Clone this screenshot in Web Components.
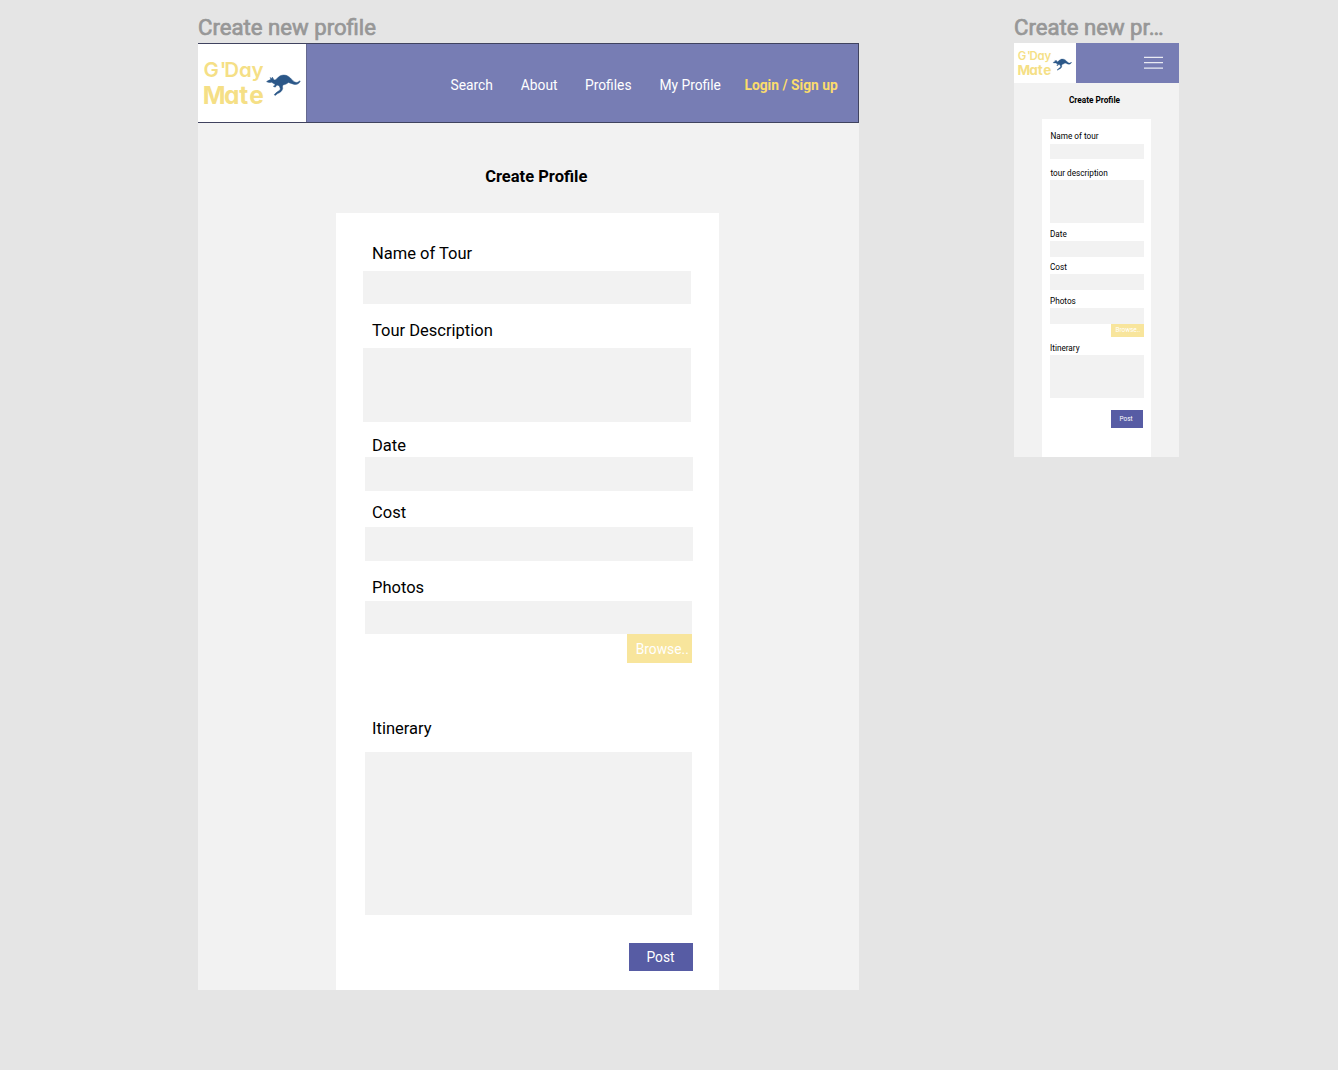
<!DOCTYPE html>
<html lang="en">
<head>
<meta charset="utf-8">
<title>Create new profile</title>
<style>
html,body{margin:0;height:100%}
body{background:#e5e5e5;font-family:Roboto,"Liberation Sans",sans-serif;color:#000}
</style>
</head>
<body>
<design-canvas>
  <art-board label="Create new profile" style="--w:660.5px;--h:947px;--tw:178px">
    <site-header></site-header>
    <tour-form heading="Create Profile" style="--head-top:44px;--head-lh:20px;--head-size:16.5px;--head-shift:16px;--card-gap:26px;--card-x:138px;--card-w:383px;--pad:27px;--fs:16.5px;--lh:20px;--indent:9px">
      <tour-field label="Name of Tour" style="--mt:31px;--gap:7px;--bh:33px;--bw:328px"></tour-field>
      <tour-field label="Tour Description" style="--mt:17px;--gap:7px;--bh:74px;--bw:328px"></tour-field>
      <tour-field label="Date" style="--mt:14px;--gap:0.5px;--bh:34.5px;--bw:328px;--bx:2px"></tour-field>
      <tour-field label="Cost" style="--mt:12px;--gap:4px;--bh:34px;--bw:328px;--bx:2px"></tour-field>
      <tour-field label="Photos" style="--mt:17px;--gap:3px;--bh:33px;--bw:327px;--bx:2px"></tour-field>
      <flat-button style="--x:264.4px;--mt:0px;--bw:64.4px;--bh:29px;--bg:#f8e59c;--fs:13.8px;--tx:8.3px;--ty:1px">Browse..</flat-button>
      <tour-field label="Itinerary" style="--mt:56px;--gap:13px;--bh:163px;--bw:327px;--bx:2px"></tour-field>
      <flat-button style="--x:266px;--mt:28px;--bw:64px;--bh:28px;--bg:#575ca4;--fs:13.8px;--tx:17.5px;--ty:1px">Post</flat-button>
    </tour-form>
  </art-board>
  <art-board label="Create new pr…" style="--w:165px;--h:414px;--tw:149.5px">
    <site-header compact></site-header>
    <tour-form heading="Create Profile" style="--head-top:12px;--head-lh:10px;--head-size:8.25px;--head-shift:0px;--head-end:4px;--card-gap:14px;--card-x:28px;--card-w:109px;--pad:8px;--fs:8.2px;--lh:10px;--indent:.5px">
      <tour-field label="Name of tour" style="--mt:12px;--gap:3px;--bh:15px;--bw:94px"></tour-field>
      <tour-field label="tour description" style="--mt:9px;--gap:2px;--bh:43px;--bw:94px"></tour-field>
      <tour-field label="Date" style="--mt:6px;--gap:2px;--bh:16px;--bw:94px;--bx:.4px;--indent:0px"></tour-field>
      <tour-field label="Cost" style="--mt:5px;--gap:2px;--bh:16px;--bw:94px;--indent:0px"></tour-field>
      <tour-field label="Photos" style="--mt:6px;--gap:2px;--bh:16px;--bw:94px;--indent:0px"></tour-field>
      <flat-button style="--x:61px;--mt:0px;--bw:33.4px;--bh:13px;--bg:#f8e59c;--fs:6.4px;--tx:4.5px;--ty:2px">Browse..</flat-button>
      <tour-field label="Itinerary" style="--mt:6px;--gap:2px;--bh:43px;--bw:94px;--bx:.4px;--indent:0px"></tour-field>
      <flat-button style="--x:61px;--mt:12px;--bw:32px;--bh:18px;--bg:#575ca4;--fs:6.4px;--tx:8.5px;--ty:2px">Post</flat-button>
    </tour-form>
  </art-board>
</design-canvas>
<script>
const shadow = (el, html) => { el.attachShadow({mode:'open'}).innerHTML = html; };

customElements.define('design-canvas', class extends HTMLElement {
  connectedCallback() {
    shadow(this, `<style>
      :host{display:flex;align-items:flex-start;gap:155.5px;box-sizing:border-box;width:1338px;height:1070px;padding:12px 0 0 198px;overflow:hidden;background:#e5e5e5}
    </style><slot></slot>`);
  }
});

customElements.define('art-board', class extends HTMLElement {
  connectedCallback() {
    shadow(this, `<style>
      :host{display:flex;flex-direction:column;flex:none;width:var(--w)}
      svg{display:block;height:31px;width:100%;overflow:visible}
      text{font:400 22.3px Roboto,sans-serif;fill:#979797;stroke:#979797;stroke-width:.7px}
      .page{height:var(--h);background:#f2f2f2;display:flex;flex-direction:column;overflow:hidden}
    </style>
    <svg><text x="0" y="23" style="white-space:pre"></text></svg>
    <div class="page"><slot></slot></div>`);
    const t = this.shadowRoot.querySelector('text');
    t.textContent = this.getAttribute('label');
    t.setAttribute('textLength', parseFloat(this.style.getPropertyValue('--tw')));
    t.setAttribute('lengthAdjust', 'spacingAndGlyphs');
  }
});

customElements.define('gday-logo', class extends HTMLElement {
  connectedCallback() {
    const box = this.getAttribute('box') || '0 0 108 79';
    shadow(this, `<style>
      :host{display:block;background:#fff}
      svg{display:block;width:100%;height:100%}
      text{font-family:Inter,Lato,sans-serif;font-feature-settings:"cv11";fill:#f5df86}
    </style>
    <svg viewBox="${box}" preserveAspectRatio="none">
      <text x="5.4 21.8 26.3 41 53.6" y="33.3" font-size="20.5" font-weight="600">G'Day</text>
      <text x="4.8 26 41.2 51.2" y="61" font-size="24.5" font-weight="700">Mate</text>
      <path fill="#2b5788" stroke="#2b5788" stroke-width=".5" d="M68.6 38.1 C70.2 37.2 71.6 36.2 72.9 35.8 L72.1 34 L74.2 35.2 L74.3 33.5 L75.9 36.3 C77.1 37 78.2 36 79.5 34.5 C82 31.2 86.8 30.6 90.4 32.8 C93.4 34.8 94.8 37.6 96.8 38.6 C98.8 39.4 100.5 38.7 101.6 37.2 L102.2 37.8 C101.2 40.2 99 41.3 96.4 40.9 C94 40.6 92.3 39.3 90.3 38.9 C89.3 40.2 87.2 41 85.2 41.4 C84.2 42.4 84.6 43.5 84.7 45 C84.2 47.8 82 49.3 79.6 50.2 L77.2 52.1 L76.2 51.4 C77.8 49.2 80.2 48 82 46.6 C82.9 45.2 81.7 43.8 81.1 42.2 L79 41.6 L77.2 43.7 L75.3 42.8 L76.8 42 L77 40.6 C75.4 40.3 74.8 39.1 73.6 38.7 C71.8 39.2 70 39 68.6 38.1Z"/>
    </svg>`);
  }
});

customElements.define('site-header', class extends HTMLElement {
  connectedCallback() {
    const compact = this.hasAttribute('compact');
    shadow(this, `<style>
      :host{display:flex;box-sizing:border-box;height:80px;flex:none;background:#777db4;border:1px solid #40435f;border-left:0}
      gday-logo{width:108px;height:78px;border-right:1px solid #666a90}
      nav{flex:1;display:flex;align-items:center;padding:3px 0 0 143.5px;font-size:13.8px;line-height:18px;color:#fff;white-space:nowrap}
      b{color:#fbdc6d;font-weight:700}
      :host([compact]){height:39.5px;border:0}
      :host([compact]) gday-logo{width:62px;height:39.5px;border:0}
      .menu{display:block;width:19px;height:14px;margin:12.5px 0 0 68px}
    </style>` + (compact
      ? `<gday-logo box="-1.5 2.5 111.7 71.8"></gday-logo><svg class="menu" viewBox="0 0 19 14"><path d="M0 1.3H19M0 6.7H19M0 12.2H19" stroke="#fff" stroke-width="1.3" opacity=".85"/></svg>`
      : `<gday-logo></gday-logo><nav><span style="width:70.3px">Search</span><span style="width:64.2px">About</span><span style="width:74.5px">Profiles</span><span style="width:85px">My Profile</span><b>Login / Sign up</b></nav>`));
  }
});

customElements.define('tour-form', class extends HTMLElement {
  connectedCallback() {
    shadow(this, `<style>
      :host{display:flex;flex-direction:column;flex:1;min-height:0}
      h1{margin:var(--head-top) 0 var(--card-gap);padding:0 var(--head-end,0px) 0 var(--head-shift);font-size:var(--head-size);line-height:var(--head-lh);font-weight:700;text-align:center}
      .card{flex:1;display:flex;flex-direction:column;box-sizing:border-box;width:var(--card-w);margin-left:var(--card-x);padding-left:var(--pad);background:#fff}
    </style><h1></h1><div class="card"><slot></slot></div>`);
    this.shadowRoot.querySelector('h1').textContent = this.getAttribute('heading');
  }
});

customElements.define('tour-field', class extends HTMLElement {
  connectedCallback() {
    shadow(this, `<style>
      :host{display:flex;flex-direction:column;flex:none;margin-top:var(--mt);gap:var(--gap)}
      label{padding-left:var(--indent);font-size:var(--fs);line-height:var(--lh);white-space:nowrap}
      div{width:var(--bw);height:var(--bh);margin-left:var(--bx,0px);background:#f2f2f2}
    </style><label></label><div></div>`);
    this.shadowRoot.querySelector('label').textContent = this.getAttribute('label');
  }
});

customElements.define('flat-button', class extends HTMLElement {
  connectedCallback() {
    shadow(this, `<style>
      :host{display:flex;align-items:center;flex:none;box-sizing:border-box;width:var(--bw);height:var(--bh);margin:var(--mt) 0 0 var(--x);padding:var(--ty,0px) 0 0 var(--tx);background:var(--bg);color:#fff;font-size:var(--fs);line-height:1.2;white-space:nowrap}
    </style><slot></slot>`);
  }
});
</script>
</body>
</html>
